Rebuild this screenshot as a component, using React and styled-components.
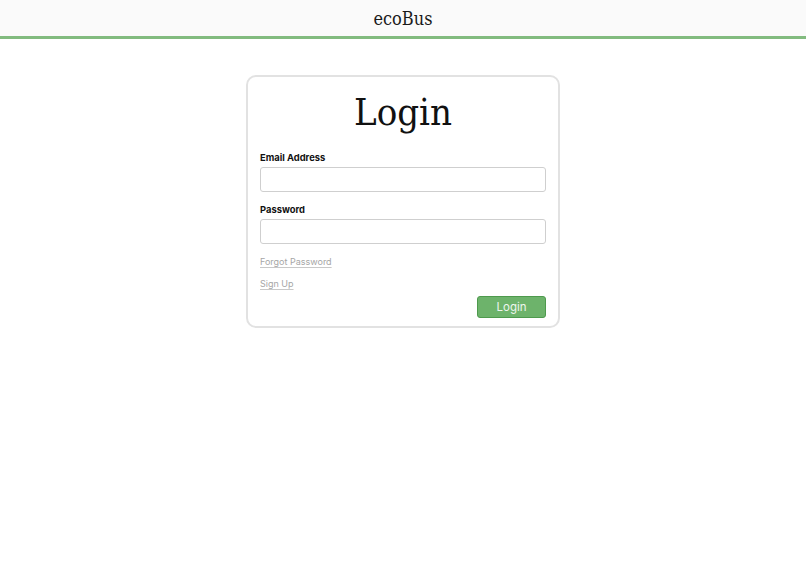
import React, { Component } from 'react';
import styled, { createGlobalStyle } from 'styled-components';

const GlobalStyle = createGlobalStyle`
    body {
        margin: 0;
        background: #ffffff;
        font-family: Inter, "Noto Sans", sans-serif;
    }
`

class App extends Component {
    constructor(props){
        super(props);

        this.state = {
            email: '',
            password: ''
        }
        this.handleChange = this.handleChange.bind(this);
    }
    handleChange(e){
        this.setState({
            [e.target.name]: e.target.value
        })
    }
    render() {
        return (
            <>
                <GlobalStyle/>
                <Header>
                    <Brand>ecoBus</Brand>
                </Header>
                <Main>
                    <Card>
                        <Title>Login</Title>
                        <Field>
                            <Label>Email Address</Label>
                            <TextBox
                                name="email"
                                type="email"
                                value={this.state.email}
                                onChange={this.handleChange}/>
                        </Field>
                        <Field>
                            <Label>Password</Label>
                            <TextBox
                                name="password"
                                type="password"
                                value={this.state.password}
                                onChange={this.handleChange}/>
                        </Field>
                        <Links>
                            <LinkText href="#">Forgot Password</LinkText>
                            <LinkText href="#">Sign Up</LinkText>
                        </Links>
                        <Actions>
                            <Button>Login</Button>
                        </Actions>
                    </Card>
                </Main>
            </>
        );
    }
}

export default App;

const Header = styled.header`
    height: 36px;
    background: #fafafa;
    border-bottom: 3px solid #82bb7f;
    display: flex;
    align-items: center;
    justify-content: center;
`
const Brand = styled.h1`
    margin: 0;
    font-family: "DejaVu Serif Condensed", "DejaVu Serif", serif;
    font-stretch: condensed;
    font-weight: 400;
    font-size: 18px;
    color: #1a1a1a;
`
const Main = styled.main`
    display: flex;
    justify-content: center;
    padding-top: 36px;
`
const Card = styled.section`
    width: 286px;
    padding: 12px 12px 8px;
    border: 2px solid #e2e2e2;
    border-radius: 10px;
    display: flex;
    flex-direction: column;
`
const Title = styled.h2`
    margin: 0 0 16px;
    text-align: center;
    font-family: "DejaVu Serif Condensed", "DejaVu Serif", serif;
    font-stretch: condensed;
    font-weight: 300;
    font-size: 38px;
    line-height: 46px;
    color: #111;
`
const Field = styled.div`
    display: flex;
    flex-direction: column;
    gap: 2px;
    margin-bottom: 11px;
`
const Label = styled.label`
    font-size: 9.4px;
    font-weight: 700;
    color: #111;
    line-height: 14px;
`
const TextBox = styled.input`
    box-sizing: border-box;
    height: 25px;
    border: 1px solid #cfcfcf;
    border-radius: 3px;
    padding: 0 6px;
    font-family: inherit;
`
const Links = styled.div`
    display: flex;
    flex-direction: column;
    align-items: flex-start;
    gap: 8px;
    margin-top: 0px;
`
const LinkText = styled.a`
    font-size: 9px;
    line-height: 14px;
    color: #a6a6a6;
    text-decoration: underline;
    text-decoration-color: #c8c8c8;
    text-underline-offset: 2px;
`
const Actions = styled.div`
    display: flex;
    justify-content: flex-end;
    margin-top: 5px;
`
const Button = styled.button`
    width: 69px;
    height: 22px;
    background: #6db36b;
    color: #eef6ee;
    border: 1px solid #4e9a4d;
    border-radius: 3px;
    font-family: Inter, sans-serif;
    font-size: 11.5px;
    padding: 0;
`
